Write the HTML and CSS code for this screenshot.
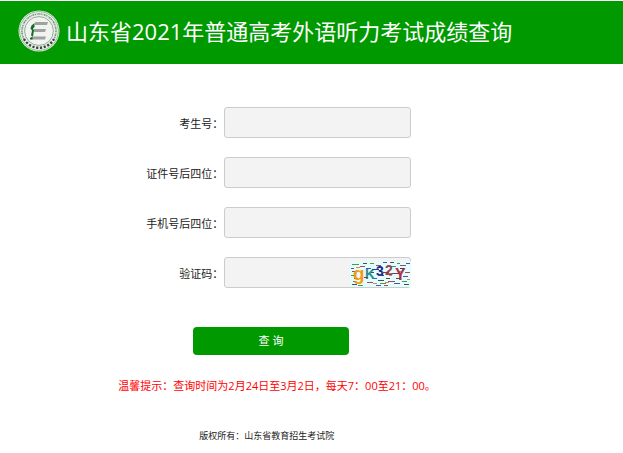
FILE: index.html
```html
<!DOCTYPE html>
<html lang="zh-CN">
<head>
  <meta charset="UTF-8">
  <meta name="viewport" content="width=device-width, initial-scale=1.0">
  <title>山东省2021年普通高考外语听力考试成绩查询</title>
  <link rel="stylesheet" href="styles.css">
</head>
<body>

  <header class="header">
    <svg class="logo" viewBox="0 0 42 42" aria-hidden="true">
      <circle cx="21" cy="21" r="20.5" fill="#e9f0e9"/>
      <circle cx="21" cy="21" r="19.4" fill="none" stroke="#6fa571" stroke-width=".7"/>
      <circle cx="21" cy="21" r="17" fill="none" stroke="#71937a" stroke-width="1.6" stroke-dasharray="1.3 .8 .7 .6 1.8 .7" pathLength="108"/>
      <path d="M6 29a17.2 17.2 0 0 0 30 0" fill="none" stroke="#e9f0e9" stroke-width="3.4"/>
      <path d="M6 29a17.2 17.2 0 0 0 30 0" fill="none" stroke="#3c463d" stroke-width="2.4" stroke-dasharray="2.2 1.6"/>
      <circle cx="21" cy="21" r="14.4" fill="#f1f3f1" stroke="#7c9a7e" stroke-width=".8"/>
      <path d="M17 12h13l-1 3H17zM16 19h12l-1 3H16zM14 26.500h14l-1 3H13z" fill="#a0a2a0"/>
      <path d="M13.500 15.500l3-2.500v4l-1.500 1.500 1 2-1 6-2-1 1-5-1.500-2zM12 28l2.500-1.500V29.500H12z" fill="#176b22"/>
    </svg>
    <h1>山东省2021年普通高考外语听力考试成绩查询</h1>
  </header>

  <form class="query-form" action="#" method="post">
    <div class="form-row">
      <label for="ksh">考生号：</label>
      <input type="text" id="ksh" name="ksh">
    </div>

    <div class="form-row">
      <label for="zjh">证件号后四位：</label>
      <input type="text" id="zjh" name="zjh">
    </div>

    <div class="form-row">
      <label for="sjh">手机号后四位：</label>
      <input type="text" id="sjh" name="sjh">
    </div>

    <div class="form-row">
      <label for="yzm">验证码：</label>
      <div class="captcha-box">
        <input type="text" id="yzm" name="yzm">
        <svg class="captcha" viewBox="0 0 61 26" role="img" aria-label="验证码">
          <rect width="61" height="26" fill="#e4fcfc"/>
          <g fill="none" stroke-width="1">
            <path stroke="#4a9a4a" d="M2 3.500h7M20 2.500h4M40 5.500h6M52 20.500h5M8 24.500h5M30 22.500h6M1 14.500h4M47 2.500h3"/>
            <path stroke="#a34a62" d="M10 5.500h5M26 4.500h5M50 4.500h6M2 10.500h4M17 21.500h6M38 20.500h7M55 11.500h5M34 24.500h4M3 20.500h3"/>
            <path stroke="#4b55a8" d="M16 7.500h5M33 1.500h4M44 22.500h6M22 17.500h5M53 15.500h5M1 7.500h3M26 24.500h5M56 2.500h4M4 17.500h4"/>
            <path stroke="#3c5550" d="M13 2.500h4M28 19.500h6M46 17.500h5M2 23.500h5M40 1.500h4M54 23.500h5M20 11.500h4M36 17.500h4"/>
            <path stroke="#d4874f" d="M6 6.500h4M23 22.500h4M35 21.500h4M49 10.500h4M57 18.500h3M39 14.500h3"/>
          </g>
          <g class="captcha-text">
            <text x="3" y="19" font-size="19" fill="#f59a16">g</text>
            <text x="15" y="18" font-size="14" fill="#248f98">K</text>
            <text x="26" y="15" font-size="14" fill="#17278f">3</text>
            <text x="35" y="14" font-size="14" fill="#934159">2</text>
            <text x="45" y="19" font-size="16" fill="#b32f3f">Y</text>
          </g>
          <g fill="none" stroke-width="1">
            <path stroke="#7b3b55" d="M31 11.500h8M42 12.500h7M14 16.500h4"/>
            <path stroke="#27408c" d="M22 8.500h7M29 14.500h5M50 7.500h4"/>
          </g>
        </svg>
      </div>
    </div>

    <button type="submit" class="btn-query">查 询</button>
  </form>

  <p class="tips">温馨提示：查询时间为2月24日至3月2日，每天7：00至21：00。</p>

  <footer class="footer">版权所有：山东省教育招生考试院</footer>

</body>
</html>
```
FILE: styles.css
```css
* {
  box-sizing: border-box;
}

body {
  margin: 0;
  background-color: #fff;
  color: #222;
  font-family: "Open Sans", "Noto Sans CJK SC", sans-serif;
  font-size: 11px;
  line-height: 16px;
}

.header {
  display: flex;
  align-items: center;
  gap: 6px;
  margin-top: 1px;
  padding: 9px 18px 12px;
  background-color: #009900;
  color: #fff;
}

.logo {
  width: 42px;
  height: 42px;
  flex: none;
}

.header h1 {
  margin: 0;
  font-size: 22px;
  font-weight: normal;
  line-height: 32px;
}

.query-form {
  padding-top: 43px;
}

.form-row {
  display: grid;
  grid-template-columns: 36% 30%;
  align-items: center;
  margin-bottom: 19px;
}

.form-row label {
  padding: 2px 1px 0 0;
  text-align: right;
}

.form-row input {
  display: block;
  width: 100%;
  height: 31px;
  padding: 4px 8px;
  border: 1px solid #ccc;
  border-radius: 3px;
  background-color: #f3f3f3;
  font: inherit;
}

.captcha-box {
  position: relative;
}

.captcha {
  position: absolute;
  top: 4px;
  right: 0;
  width: 61px;
  height: 26px;
}

.captcha-text {
  font-family: "Liberation Sans", sans-serif;
  font-weight: bold;
}

.btn-query {
  display: block;
  width: 25%;
  height: 28px;
  margin: 39px 0 0 31%;
  padding: 0;
  border: none;
  border-radius: 4px;
  background-color: #009900;
  color: #fff;
  font: inherit;
  cursor: pointer;
}

.btn-query:hover {
  background-color: #008800;
}

.tips {
  margin: 23px 0 0 19%;
  color: #ff0000;
}

.footer {
  margin: 34px 0 0 32%;
  font-size: 9px;
}
```
